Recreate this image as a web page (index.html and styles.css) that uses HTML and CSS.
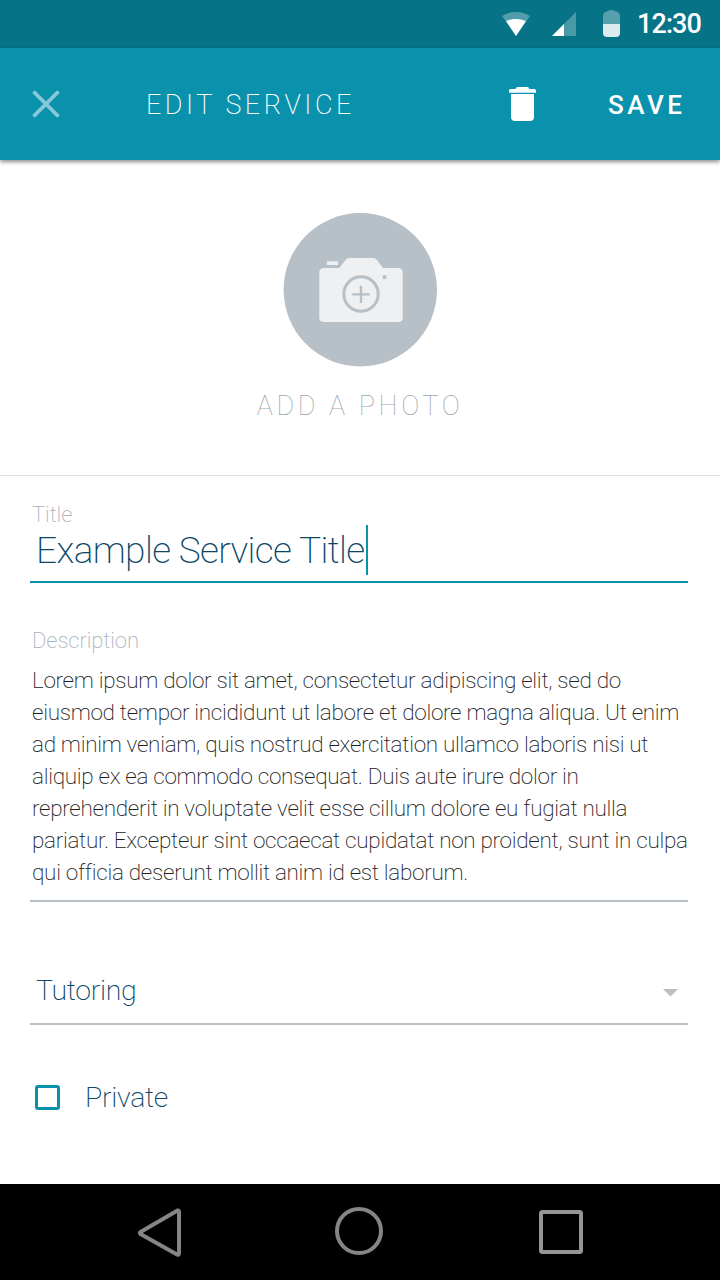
FILE: index.html
```html
<!DOCTYPE html>
<html lang="en">
<head>
<meta charset="utf-8">
<title>Edit Service</title>
<link rel="stylesheet" href="styles.css">
</head>
<body>
<div class="screen">
  <div class="status">
    <svg class="status-icons" width="130" height="48" viewBox="500 0 130 48">
      <path d="M502 16Q516 8 530 16L516 36Z" fill="#fff" fill-opacity=".3"/>
      <path d="M506 21Q516 17 526 21L516 36Z" fill="#fff"/>
      <path d="M552 36L576 12V36Z" fill="#fff" fill-opacity=".27"/>
      <path d="M552 36L564 24V36Z" fill="#fff"/>
      <path d="M603 24V16Q603 12 607 11.500Q608 10 611.500 10Q615 10 616 11.500Q620 12 620 16V24Z" fill="#fff" fill-opacity=".32"/>
      <path d="M603 24H620V33Q620 37 616 37H607Q603 37 603 33Z" fill="#deebed"/>
    </svg>
    <span class="time">12:30</span>
  </div>
  <header class="bar">
    <svg class="close" width="28" height="28" viewBox="0 0 28 28"><path d="M1.500 1.500L26.500 26.500M26.500 1.500L1.500 26.500" stroke="#88c9d7" stroke-width="3.800"/></svg>
    <h1 class="heading">EDIT SERVICE</h1>
    <svg class="trash" width="27" height="34" viewBox="0 0 27 34"><path d="M0 5.700V3.500Q0 2 1.500 2H6.500Q7 0 9 0H18Q20 0 20.500 2H25Q27 2 27 3.500V5.700Z" fill="#fff"/><path d="M2 7H25V30Q25 34 21 34H6Q2 34 2 30Z" fill="#fff"/></svg>
    <span class="save">SAVE</span>
  </header>
  <section class="photo">
    <svg width="154" height="154" viewBox="283 213 154 154">
      <circle cx="360.300" cy="289.800" r="76.700" fill="#b7bfc7"/>
      <path d="M326.800 261.300H338V265H326.800Z" fill="#eff0f2"/>
      <path d="M324 268H339.300L345.500 260Q347 258 350 258H373Q375.500 258 377 260L383 268H398Q402.700 268 402.700 272.500V317.500Q402.700 322 398 322H324Q319.300 322 319.300 317.500V272.500Q319.300 268 324 268Z" fill="#eff0f2"/>
      <circle cx="361" cy="294" r="17.200" fill="none" stroke="#b7bfc7" stroke-width="3"/>
      <path d="M352.300 294.400H369.700M361 285.700V303" stroke="#b7bfc7" stroke-width="2.400"/>
      <path d="M382.700 275.300H386.300V279H382.700Z" fill="#b7bfc7"/>
    </svg>
    <span class="add">ADD A PHOTO</span>
  </section>
  <main class="form">
    <div class="label title-label">Title</div>
    <div class="title-field"><span class="title-value">Example Service Title</span><i class="caret"></i></div>
    <div class="label desc-label">Description</div>
    <div class="desc">
      <div>Lorem ipsum dolor sit amet, consectetur adipiscing elit, sed do</div>
      <div>eiusmod tempor incididunt ut labore et dolore magna aliqua. Ut enim</div>
      <div>ad minim veniam, quis nostrud exercitation ullamco laboris nisi ut</div>
      <div>aliquip ex ea commodo consequat. Duis aute irure dolor in</div>
      <div>reprehenderit in voluptate velit esse cillum dolore eu fugiat nulla</div>
      <div>pariatur. Excepteur sint occaecat cupidatat non proident, sunt in culpa</div>
      <div>qui officia deserunt mollit anim id est laborum.</div>
    </div>
    <div class="select"><span>Tutoring</span><svg width="15" height="8" viewBox="0 0 15 8"><path d="M0 0H15L7.500 7.500Z" fill="#b7bfc7"/></svg></div>
    <div class="check"><i class="box"></i><span>Private</span></div>
  </main>
  <nav class="nav">
    <svg width="720" height="96" viewBox="0 1184 720 96" fill="none" stroke-width="4" stroke-linejoin="round">
      <path d="M177.500 1210.500Q179 1210 179 1212V1253Q179 1255.500 177 1254.500L140.500 1234Q139.500 1233 140.500 1232Z" stroke="#858585"/>
      <circle cx="359" cy="1231" r="22" stroke="#858585"/>
      <rect x="541" y="1212" width="40" height="40" rx="1.500" stroke="#959595"/>
    </svg>
  </nav>
</div>
</body>
</html>
```
FILE: styles.css
```css
* { box-sizing: border-box; }
body { margin: 0; background: #fff; font-family: Roboto, "Liberation Sans", sans-serif; }
.screen { width: 720px; height: 1280px; display: flex; flex-direction: column; overflow: hidden; }
.screen span, .heading, .desc div { white-space: nowrap; }
svg { display: block; flex: none; }
.status { height: 48px; background: #077387; display: flex; padding-left: 500px; }
.time { margin-left: 7px; font-size: 27px; line-height: 48px; font-weight: 500; letter-spacing: -.9px; color: #fff; }
.bar { height: 112px; flex: none; background: #0a92ad; box-shadow: 0 2px 4px rgba(0,0,0,.45); display: flex; align-items: center; color: #fff; padding-left: 32px; }
.close { margin-top: -1px; }
.heading { margin: 2px 0 0 86px; width: 363px; font-size: 27px; font-weight: 200; letter-spacing: 3.5px; line-height: 30px; }
.save { margin: 2px 0 0 72px; font-size: 26px; font-weight: 500; letter-spacing: 3.5px; line-height: 30px; }
.photo { height: 316px; flex: none; border-bottom: 1px solid #e0e0e0; padding-top: 53px; display: flex; flex-direction: column; align-items: center; }
.add { margin-top: 24px; font-size: 27px; line-height: 30px; font-weight: 100; letter-spacing: 3.6px; color: #98a5b0; }
.form { height: 708px; flex: none; padding: 26px 32px 0 30px; }
.label { padding-left: 2px; font-size: 22px; line-height: 26px; font-weight: 200; letter-spacing: -.1px; color: #a9b3bd; }
.title-field { height: 58px; margin-top: -3px; border-bottom: 2px solid #0a92ad; display: flex; padding-left: 6px; color: #0a4666; }
.title-value { width: 330px; font-size: 37px; line-height: 52px; font-weight: 200; letter-spacing: -.6px; }
.caret { width: 2px; height: 50px; background: #0a92ad; }
.desc-label { margin-top: 45px; }
.desc { margin-top: 10px; height: 238px; padding-left: 2px; border-bottom: 2px solid #b7bfc7; font-size: 22.5px; line-height: 32px; font-weight: 200; letter-spacing: -.3px; color: #202020; }
.select { height: 123px; padding: 55px 10.5px 0 6px; border-bottom: 2px solid #b7bfc7; display: flex; justify-content: space-between; align-items: center; font-size: 28.5px; font-weight: 200; letter-spacing: -.3px; color: #0a4666; }
.select svg { margin-top: 6px; }
.check { display: flex; align-items: center; margin: 54px 0 0 5px; height: 36px; font-size: 28.5px; font-weight: 200; letter-spacing: -.3px; color: #0a4666; }
.box { width: 25px; height: 25px; margin: 1px 25px 0 0; border: 3px solid #0a92ad; border-radius: 3px; }
.nav { height: 96px; flex: none; background: #000; }
```
